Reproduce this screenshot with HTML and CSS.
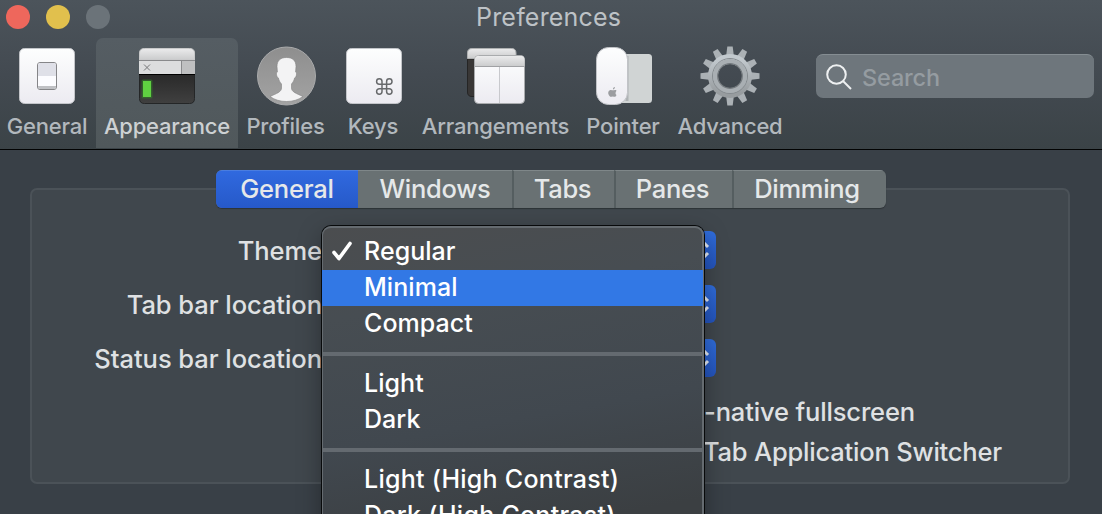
FILE: index.html
```html
<!DOCTYPE html>
<html lang="en">
<head>
<meta charset="utf-8">
<title>Preferences</title>
<link rel="stylesheet" href="styles.css">
</head>
<body>
<div class="window">
  <header class="header">
    <div class="titlebar">
      <div class="lights"><i class="light close"></i><i class="light minimize"></i><i class="light disabled"></i></div>
      <h1 class="title">Preferences</h1>
    </div>
    <nav class="toolbar">
      <div class="tool tool-general">
        <svg class="icon" viewBox="0 0 60 60">
          <defs>
            <linearGradient id="paper" x1="0" y1="0" x2="0" y2="1"><stop offset="0" stop-color="#fdfefe"/><stop offset="1" stop-color="#ecebf1"/></linearGradient>
            <linearGradient id="bar" x1="0" y1="0" x2="0" y2="1"><stop offset="0" stop-color="#ebebec"/><stop offset="1" stop-color="#cacbcc"/></linearGradient>
            <linearGradient id="dark" x1="0" y1="0" x2="0" y2="1"><stop offset="0" stop-color="#292929"/><stop offset="1" stop-color="#404040"/></linearGradient>
            <linearGradient id="metal" x1="0" y1="0" x2="0" y2="1"><stop offset="0" stop-color="#c2c9ce"/><stop offset="1" stop-color="#979c9f"/></linearGradient>
            <linearGradient id="disc" x1="0" y1="0" x2="0" y2="1"><stop offset="0" stop-color="#8e8e8e"/><stop offset="1" stop-color="#a3a3a3"/></linearGradient>
          </defs>
          <rect x="2.5" y="2.5" width="55" height="55" rx="5" fill="url(#paper)" stroke="#c3c5c9"/>
          <rect x="20.5" y="16.5" width="19" height="27" rx="2.5" fill="#fcfcff" stroke="#858588"/>
          <path d="M21 19q0-2 2-2h14q2 0 2 2v11H21z" fill="#dfe0e8"/>
          <path d="M21 40h18v1q0 2-2 2H23q-2 0-2-2z" fill="#bfc0c4"/>
        </svg>
        <span class="tool-label">General</span>
      </div>
      <div class="tool tool-appearance selected">
        <svg class="icon" viewBox="0 0 60 60">
          <path d="M2.500 28h55v24.500q0 5-5 5h-45q-5 0-5-5z" fill="url(#dark)" stroke="#242627"/>
          <path d="M2.500 14V7q0-4.500 5-4.500h45q5 0 5 4.500v7z" fill="url(#bar)" stroke="#c8c9ca"/>
          <path d="M2 15h42v13H2z" fill="#dcddde"/><path d="M45 15h13v13H45z" fill="#bfc0c1"/>
          <path d="M2 14.500h56M44.500 15v13" stroke="#898a8c"/>
          <path d="M2 28.500h56" stroke="#000"/>
          <path d="M7 18.500l6 6M13 18.500l-6 6" stroke="#77787a"/>
          <rect x="4.500" y="33.500" width="11" height="19" rx="1.500" fill="#347a2a" opacity=".6"/>
          <rect x="6" y="35" width="8" height="16" fill="#5fd041"/>
        </svg>
        <span class="tool-label">Appearance</span>
      </div>
      <div class="tool tool-profiles">
        <svg class="icon" viewBox="0 0 60 60">
          <circle cx="30.500" cy="30" r="29" fill="url(#disc)" stroke="#a9aaab"/>
          <path d="M30.500 11.500c-6 0-9.500 3-9.500 9l.4 5.500c-1.700 0-.9 5.500 1 6 .7 3 1.600 4 3.100 6v4c0 4-5 5.500-11.500 8.500Q21 55.500 30.500 55.500T47 50.500C40.500 47.500 35.500 46 35.500 42v-4c1.500-2 2.400-3 3.100-6 1.900-.5 2.700-6 1-6l.4-5.500c0-6-3.500-9-9.500-9z" fill="#f3f3f4" stroke="#818182" stroke-width=".6"/>
        </svg>
        <span class="tool-label">Profiles</span>
      </div>
      <div class="tool tool-keys">
        <svg class="icon" viewBox="0 0 60 60">
          <rect x="3.500" y="2.500" width="55" height="55" rx="5" fill="url(#paper)" stroke="#c3c5c9"/>
          <path d="M39 38v-2.500a2.700 2.700 0 1 0-2.700 2.700h10a2.700 2.700 0 1 0-2.700-2.700v10a2.700 2.700 0 1 0 2.700-2.700h-10a2.700 2.700 0 1 0 2.700 2.700z" fill="none" stroke="#686a6c" stroke-width="1.500"/>
        </svg>
        <span class="tool-label">Keys</span>
      </div>
      <div class="tool tool-arrangements">
        <svg class="icon" viewBox="0 0 60 60">
          <path d="M1.500 13h48v37.500H6q-4.500 0-4.500-4.500z" fill="#393736" stroke="#252525"/>
          <path d="M1.500 12.500V7q0-4.500 4.500-4.500h39.500Q50 2.500 50 7v5.500z" fill="url(#bar)" stroke="#aeb0b1"/>
          <rect x="8.500" y="9.500" width="50" height="48" rx="4" fill="url(#paper)" stroke="#a9abad"/>
          <path d="M9 20.500V14q0-4 4-4h41.500q4 0 4 4v6.500z" fill="url(#bar)"/>
          <path d="M9 20.500h49.500" stroke="#a0a1a4"/><path d="M33.500 21v36" stroke="#c8c9cd"/>
        </svg>
        <span class="tool-label">Arrangements</span>
      </div>
      <div class="tool tool-pointer">
        <svg class="icon" viewBox="0 0 60 60">
          <rect x="20" y="8" width="39" height="49" rx="3.500" fill="#d0d4d4"/>
          <path d="M34 10v45" stroke="#aeb2b4" stroke-width="3"/>
          <rect x="3.500" y="1.500" width="31" height="57" rx="12" fill="url(#paper)" stroke="#c1c3c7"/>
          <path d="M20 43.500c1-.2 2-1 1.900-2.500-1.300.2-2.100 1.200-1.900 2.500zm2.700.5c-1.200-.3-2 .3-2.700.3s-1.600-.5-2.600-.3c-2.300.5-2.700 3-1.600 5.100 1.400 2.700 2.200 1.400 4 1.400s2.300 1.200 3.700-1.500q-2-1.500 0-4.300-.4-.5-.8-.7z" fill="#9b9da0"/>
        </svg>
        <span class="tool-label">Pointer</span>
      </div>
      <div class="tool tool-advanced">
        <svg class="icon" viewBox="0 0 60 60">
          <g id="teeth" fill="#abb1b5">
            <path id="tooth" d="M25.500 15L27.300.5h5.400L34.500 15z"/>
            <use href="#tooth" transform="rotate(30 30 30)"/><use href="#tooth" transform="rotate(60 30 30)"/><use href="#tooth" transform="rotate(90 30 30)"/><use href="#tooth" transform="rotate(120 30 30)"/><use href="#tooth" transform="rotate(150 30 30)"/>
          </g>
          <use href="#teeth" transform="rotate(180 30 30)"/>
          <circle cx="30" cy="30" r="17" fill="none" stroke="url(#metal)" stroke-width="10"/>
          <circle cx="30" cy="30" r="17.500" fill="none" stroke="#858b8f" stroke-width="1"/>
          <circle cx="30" cy="30" r="15" fill="none" stroke="#a9afb3" stroke-width="4"/>
          <circle cx="30" cy="30" r="12.300" fill="none" stroke="#73797d" stroke-width="1.200"/>
        </svg>
        <span class="tool-label">Advanced</span>
      </div>
      <div class="search">
        <svg class="search-icon" viewBox="0 0 26 26"><circle cx="10.500" cy="10.500" r="9.300"/><path d="M17 17l8 8"/></svg>
        <span class="search-text">Search</span>
      </div>
    </nav>
  </header>
  <main class="content">
    <div class="segments">
      <span class="segment seg-general active">General</span><span class="segment seg-windows">Windows</span><span class="segment seg-tabs">Tabs</span><span class="segment seg-panes">Panes</span><span class="segment seg-dimming">Dimming</span>
    </div>
    <section class="group">
      <div class="row"><span class="row-label">Theme</span><span class="popup"><svg class="chevrons" viewBox="0 0 14 18"><path d="M2 6l5-5 5 5M2 12l5 5 5-5"/></svg></span></div>
      <div class="row"><span class="row-label">Tab bar location</span><span class="popup"><svg class="chevrons" viewBox="0 0 14 18"><path d="M2 6l5-5 5 5M2 12l5 5 5-5"/></svg></span></div>
      <div class="row"><span class="row-label">Status bar location</span><span class="popup"><svg class="chevrons" viewBox="0 0 14 18"><path d="M2 6l5-5 5 5M2 12l5 5 5-5"/></svg></span></div>
      <div class="options"><span class="option">-native fullscreen</span><span class="option option-tab">Tab Application Switcher</span></div>
    </section>
  </main>
  <div class="menu">
    <div class="menu-item"><svg class="check" viewBox="0 0 20 20"><path d="M2 11.500l5 6L18 2.500"/></svg>Regular</div>
    <div class="menu-item highlighted">Minimal</div>
    <div class="menu-item">Compact</div>
    <div class="separator"></div>
    <div class="menu-item">Light</div>
    <div class="menu-item">Dark</div>
    <div class="separator"></div>
    <div class="menu-item item-contrast">Light (High Contrast)</div>
    <div class="menu-item item-contrast">Dark (High Contrast)</div>
  </div>
</div>
</body>
</html>
```
FILE: styles.css
```css
* { box-sizing: border-box; }
body { margin: 0; font-family: Inter, "Liberation Sans", sans-serif; color: #dfe1e3; }
.window { position: relative; width: 1102px; height: 514px; overflow: hidden; background: #394047; }
.header { height: 150px; background: linear-gradient(#4c545b, #434a51 50%, #3b4347); border-bottom: 1px solid #020303; }
.titlebar { display: flex; align-items: center; height: 38px; padding: 0 6px 5px; }
.lights { display: flex; gap: 16px; width: 470px; }
.light { width: 24px; height: 24px; border-radius: 50%; }
.close { background: #ee675c; }
.minimize { background: #e1c04d; }
.disabled { background: #6b7379; }
.title { margin: 0; font-size: 25px; font-weight: 400; line-height: 30px; letter-spacing: .2px; color: #bdc2c6; white-space: nowrap; }
.toolbar { display: flex; height: 110px; }
.tool { display: flex; flex: none; flex-direction: column; align-items: center; padding-top: 8px; }
.tool-general { width: 94px; margin-right: 2px; }
.tool-appearance { width: 142px; }
.tool-profiles { width: 95px; }
.tool-keys { width: 80px; }
.tool-arrangements { width: 165px; }
.tool-pointer { width: 90px; }
.tool-advanced { width: 124px; }
.selected { border-radius: 7px 7px 0 0; background: linear-gradient(#555d63, #50585b); }
.icon { width: 60px; height: 60px; }
.tool-label { margin-top: 6px; font-size: 22px; font-weight: 450; line-height: 28px; letter-spacing: -.2px; color: #b2b8bd; white-space: nowrap; }
.selected .tool-label { color: #cdd1d3; }
.search { display: flex; align-items: center; width: 278px; height: 44px; margin: 16px 0 0 24px; padding: 0 10px; border-top: 1px solid #858d92; border-radius: 7px; background: #6e767c; }
.search-icon { width: 26px; height: 26px; fill: none; stroke: #eef0f1; stroke-width: 2; }
.search-text { margin-left: 10px; padding-top: 2px; font-size: 23.500px; font-weight: 450; line-height: 30px; letter-spacing: -.15px; color: #959ca1; }
.content { padding: 20px 32px 0 30px; }
.segments { position: relative; display: flex; width: 670px; height: 38px; margin-left: 186px; overflow: hidden; border-radius: 6px; background: #697173; box-shadow: 0 1px 1px #2d3337; }
.segment { display: flex; align-items: center; justify-content: center; padding-bottom: 3px; border-top: 1px solid #7f8789; border-left: 2px solid #555e60; font-size: 25.500px; font-weight: 450; letter-spacing: -.3px; color: #e5e8e9; }
.active { border-left: 0; border-top-color: #4a7de0; background: linear-gradient(#3069df, #2659c9); }
.seg-general { width: 142px; letter-spacing: -.2px; }
.seg-windows { width: 154px; border-left: 0; }
.seg-tabs { width: 102px; padding-right: 3px; }
.seg-panes { width: 118px; padding-right: 3px; }
.seg-dimming { width: 154px; padding-right: 6px; }
.group { height: 296px; margin-top: -20px; padding-top: 41px; border: 2px solid #4b5258; border-radius: 7px; background: #40474d; }
.row { display: flex; align-items: center; height: 38px; margin-bottom: 16px; }
.row-label { width: 290px; padding-top: 2px; font-size: 25.500px; font-weight: 450; line-height: 34px; letter-spacing: -.05px; text-align: right; white-space: nowrap; }
.popup { display: flex; align-items: center; justify-content: flex-end; width: 389px; height: 38px; margin-left: 5px; padding-right: 6px; border-radius: 6px; background: linear-gradient(#306ddc, #2454bd); }
.chevrons { width: 14px; height: 18px; fill: none; stroke: #e5ebf5; stroke-width: 3; }
.options { display: flex; flex-direction: column; margin: -1px 0 0 672px; }
.option { height: 40px; font-size: 25.500px; font-weight: 450; line-height: 40px; letter-spacing: -.15px; white-space: nowrap; }
.option-tab { margin-left: -1px; letter-spacing: -.2px; }
.menu { position: absolute; top: 226px; left: 322px; width: 382px; height: 310px; padding-top: 6px; border: solid #656b70; border-width: 2px 2px 0 1px; border-radius: 9px 9px 0 0; background: linear-gradient(170deg, #4b4d4f, #474d52 25%, #41484f 60%, #3b3f42 90%); box-shadow: 0 0 0 1px #080a0b, 0 8px 24px rgba(0,0,0,.35); color: #fff; }
.menu-item { position: relative; display: flex; align-items: center; height: 36px; padding: 0 0 2px 41px; font-size: 25px; font-weight: 500; letter-spacing: .05px; white-space: nowrap; }
.item-contrast { letter-spacing: .27px; }
.highlighted { margin: 0 -1px; padding-left: 42px; background: #3278e5; }
.separator { height: 4px; margin: 10px 0; background: #646a70; }
.check { position: absolute; left: 9px; top: 7px; width: 20px; height: 20px; fill: none; stroke: #fff; stroke-width: 3.600; stroke-linecap: round; stroke-linejoin: round; }
```
